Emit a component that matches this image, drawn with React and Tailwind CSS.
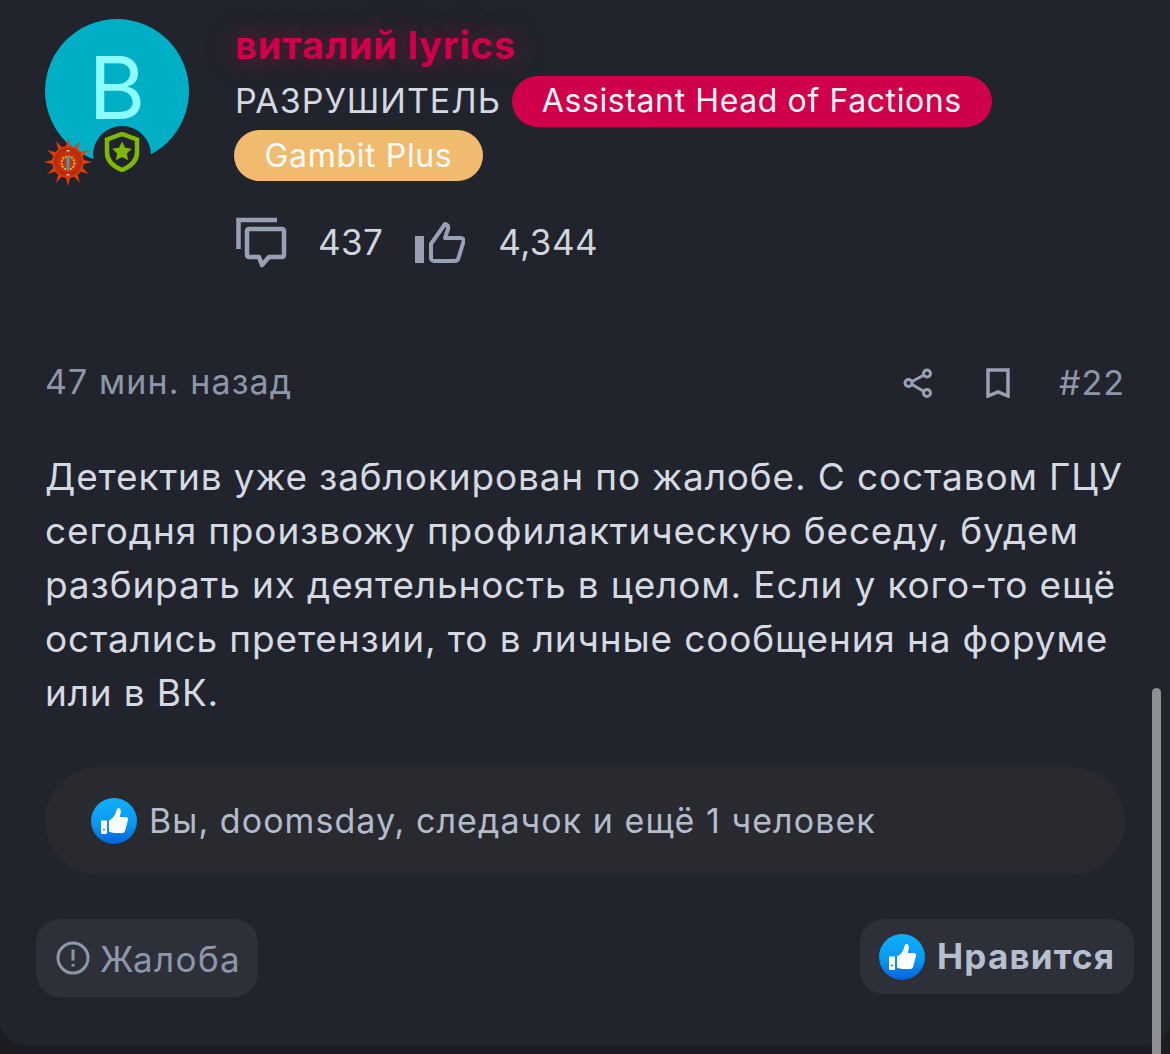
import React from 'react';

const LikeBadge = ({ id }) => (
  <svg viewBox="0 0 46 46" className="w-[46px] h-[46px] shrink-0">
    <defs>
      <linearGradient id={id} x1="0" y1="0" x2="0" y2="1">
        <stop offset="0" stopColor="#10b0fb" />
        <stop offset="0.6" stopColor="#0a94ee" />
        <stop offset="1" stopColor="#0560d8" />
      </linearGradient>
    </defs>
    <circle cx="23" cy="23" r="23" fill={`url(#${id})`} />
    <path d="M10 22.500h6v12.500a1 1 0 0 1-1 1h-4a1 1 0 0 1-1-1z" fill="#fff" />
    <circle cx="13" cy="31.500" r="1" fill="#0a7fe6" />
    <path d="M18 22.500c3-1.500 6-4.500 7-8.500.5-2 1-4.500 3-4 2 .6 2 3.500 1.500 5.500l-.8 3.500h6c2 0 2.700 1.700 2.200 3.300l-2.800 10.500c-.5 1.500-1.500 2.200-3 2.200h-6c-2 0-4.500-.5-7.100-1.500z" fill="#fff" />
  </svg>
);

const SunBadge = () => {
  const spikes = [];
  for (let i = 0; i < 12; i++) {
    spikes.push(<polygon key={i} points="24,0 26.500,10 21.500,10" fill="#e43d0c" transform={`rotate(${i * 30} 24 24)`} />);
  }
  return (
    <svg viewBox="0 0 48 48" className="w-12 h-12">
      {spikes}
      <circle cx="24" cy="24" r="16" fill="#d9380c" />
      <circle cx="24" cy="24" r="14" fill="#b92b0a" />
      <circle cx="24" cy="24" r="11" fill="#c5300c" />
      <circle cx="24" cy="25" r="6.500" fill="none" stroke="#e6b020" strokeWidth="2" strokeDasharray="2 1" />
      <rect x="22.500" y="18" width="3" height="14" rx="1.500" fill="#3f9fb5" />
      <rect x="22.500" y="12" width="3" height="1.500" fill="#f1c9b5" />
      <rect x="22.500" y="36" width="3" height="1.500" fill="#f1c9b5" />
    </svg>
  );
};

const App = () => {
  return (
    <div className="relative h-[1054px] w-[1170px] overflow-hidden bg-[#1b1d22] font-['Inter',sans-serif]">
      <div className="h-[1045px] rounded-b-[24px] bg-[#21242c] pl-[45px] pr-[45px] pt-[19px]">
        {/* author */}
        <div className="flex gap-[46px]">
          <div className="relative h-[144px] w-[144px] shrink-0">
            <div className="flex h-[144px] w-[144px] items-center justify-center rounded-full bg-[#00afc6] pb-[8px] text-[87px] leading-none text-[#8cfcff]">
              В
            </div>
            <div className="absolute left-[48px] top-[107px] flex h-[58px] w-[58px] items-center justify-center rounded-full bg-[#21242c] pb-[6px]">
              <svg viewBox="0 0 36 40" className="h-[40px] w-[36px]">
                <path d="M18 2l15 5.500v13c0 8-6.500 14-15 17.500C9.500 34.500 3 28.500 3 20.500v-13z" fill="none" stroke="#7fb800" strokeWidth="4.500" />
                <path d="M18 9.500l3 6.300 6.800.9-5 4.700 1.300 6.800-6.100-3.300-6.100 3.300 1.300-6.800-5-4.700 6.800-.9z" fill="#7fb800" />
              </svg>
            </div>
            <div className="absolute left-[-1px] top-[119px]">
              <SunBadge />
            </div>
          </div>
          <div className="min-w-0 flex-1">
            <div className="text-[38px] font-bold leading-[52px] tracking-[0.85px] text-[#cf0049] [text-shadow:0_0_26px_rgba(207,0,73,0.55)]">
              виталий lyrics
            </div>
            <div className="mt-[3px] flex h-[54px] items-center gap-[11px]">
              <span className="text-[34px] leading-none tracking-[1px] text-[#d3d8e2]">РАЗРУШИТЕЛЬ</span>
              <span className="flex h-[51px] w-[480px] items-center justify-center rounded-full bg-[#cf0049] text-[32px] tracking-[0.6px] text-[#f3f4f6]">
                Assistant Head of Factions
              </span>
            </div>
            <div className="ml-[-1px] mt-[2px] flex h-[51px] w-[249px] items-center justify-center rounded-full bg-[#f0bb6f] text-[32px] tracking-[0.65px] text-[#fbfbf7]">
              Gambit Plus
            </div>
            <div className="mt-[36px] flex h-[52px] items-center text-[#d1d5db]">
              <svg viewBox="0 0 52 52" className="h-[52px] w-[52px]" fill="none" stroke="#98a1b3" strokeWidth="4.500">
                <path d="M42 3H3.500v29" />
                <path d="M14 12h33a2 2 0 0 1 2 2v24a2 2 0 0 1-2 2H34l-7 8-3-8H14a2 2 0 0 1-2-2V14a2 2 0 0 1 2-2z" strokeLinejoin="round" />
              </svg>
              <span className="mb-[2px] ml-[31px] text-[35px] leading-none tracking-[0.4px]">437</span>
              <svg viewBox="0 0 50 44" className="ml-[32px] h-[44px] w-[50px]" fill="none" stroke="#98a1b3" strokeWidth="4" strokeLinejoin="round">
                <path d="M4.500 15v27" strokeWidth="9" />
                <path d="M16 23L30 3c3 1 3.500 3 3 5l-3 9h15.500c2.500 0 3.500 1.500 3 3.500L43.500 37c-.5 2-2 3-4 3H19a3 3 0 0 1-3-3z" />
              </svg>
              <span className="mb-[2px] ml-[33px] text-[35px] leading-none tracking-[0.5px]">4,344</span>
            </div>
          </div>
        </div>

        {/* post meta */}
        <div className="mt-[92px] flex h-[44px] items-center justify-between text-[#8e97aa]">
          <span className="mb-[3px] text-[34px] tracking-[1.1px]">47 мин. назад</span>
          <div className="flex items-center">
            <svg viewBox="0 0 30 30" className="h-[30px] w-[30px]" fill="none" stroke="#98a1b3" strokeWidth="3">
              <circle cx="24" cy="5.500" r="3.500" />
              <circle cx="5.500" cy="15" r="3.500" />
              <circle cx="24" cy="25" r="3.500" />
              <path d="M9 13.500l12-6.500M9 16.500l12 7" />
            </svg>
            <svg viewBox="0 0 24 30" className="ml-[53px] h-[30px] w-[24px]" fill="none" stroke="#98a1b3" strokeWidth="3.500">
              <path d="M2 2h20v26l-10-4-10 4z" />
            </svg>
            <span className="mb-[2px] ml-[49px] text-[34px] tracking-[1px]">#22</span>
          </div>
        </div>

        {/* post text */}
        <p className="mt-[45px] w-[1090px] text-[37px] leading-[54px] tracking-[0.85px] text-[#d5d9e1]">
          Детектив уже заблокирован по жалобе. С составом ГЦУ сегодня произвожу профилактическую беседу, будем разбирать их деятельность в целом. Если у кого-то ещё остались претензии, то в личные сообщения на форуме или в ВК.
        </p>

        {/* likes */}
        <div className="mt-[47px] flex h-[108px] items-center gap-[12px] rounded-full bg-[#292a30] pl-[46px] text-[34px] tracking-[1.05px] text-[#b4bccb]">
          <LikeBadge id="likeA" />
          <span className="mb-[2px]">Вы, doomsday, следачок и ещё 1 человек</span>
        </div>

        {/* actions */}
        <div className="ml-[-9px] mr-[-9px] mt-[44px] flex items-start justify-between">
          <button className="flex h-[78px] w-[222px] items-center gap-[10px] rounded-[24px] bg-[#2d3039] pl-[20px] text-[35px] tracking-[1.4px] text-[#8e97aa]">
            <svg viewBox="0 0 34 34" className="h-[34px] w-[34px]" fill="none" stroke="#8e97aa" strokeWidth="3">
              <circle cx="17" cy="17" r="15" />
              <path d="M17 8.500v11M17 23v2.500" />
            </svg>
            <span className="mt-[2px]">Жалоба</span>
          </button>
          <button className="flex h-[75px] w-[274px] items-center gap-[12px] rounded-[24px] bg-[#2d3039] pl-[19px] text-[35px] font-bold tracking-[1.2px] text-[#b6bfce]">
            <LikeBadge id="likeB" />
            Нравится
          </button>
        </div>
      </div>

      {/* overlay scrollbar */}
      <div className="absolute bottom-0 left-[1152px] top-[688px] w-[9px] rounded-t-full bg-[#8f9094]" />
    </div>
  );
};

export default App;
